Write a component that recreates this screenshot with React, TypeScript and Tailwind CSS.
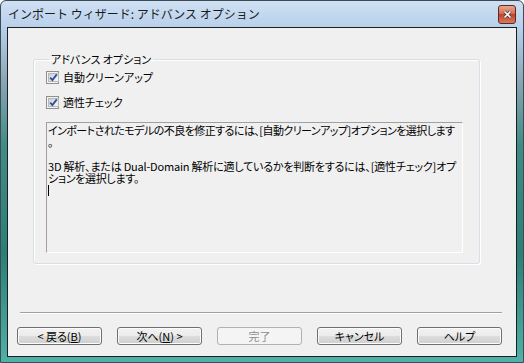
import React from 'react';

const jp = "font-['Noto_Sans_CJK_JP','Noto_Sans',sans-serif]";

const CheckBox = ({ label }: { label: string }) => (
  <div className="flex items-center gap-[4px] h-[13px]">
    <span className="w-[13px] h-[13px] border border-[#8f8f8f] bg-[#f4f4f4] p-[1px] flex shrink-0">
      <span className="flex-1 bg-[linear-gradient(135deg,#cfcfcf,#f7f7f7)] border border-[#b8b8b8] flex items-center justify-center">
        <svg width="9" height="9" viewBox="0 0 9 9">
          <path d="M1.2 4.6 L3.4 7 L7.8 1.4" fill="none" stroke="#2a4da0" strokeWidth="1.8" />
        </svg>
      </span>
    </span>
    <span className="text-[11px] leading-[13px] text-black [font-feature-settings:'palt']">{label}</span>
  </div>
);

const Btn = ({ children, disabled }: { children: React.ReactNode; disabled?: boolean }) =>
  disabled ? (
    <button className="w-[85px] h-[18px] rounded-[3px] border border-[#adb2b5] bg-[#f4f4f4] text-[11px] leading-none text-[#8d8d8d] flex items-center justify-center [font-feature-settings:'palt']">
      {children}
    </button>
  ) : (
    <button className="w-[85px] h-[18px] rounded-[3px] border border-[#707070] bg-[linear-gradient(#f2f2f2,#ebebeb_50%,#dddddd_50%,#cfcfcf)] shadow-[inset_0_0_0_1px_#fcfcfc] text-[11px] leading-none text-black flex items-center justify-center [font-feature-settings:'palt']">
      {children}
    </button>
  );

export default function App() {
  return (
    <div className={`${jp} w-[524px] h-[363px] flex flex-col border border-[#3d4b57] rounded-t-[6px] bg-[linear-gradient(#cfe0f3,#b6cfea_8%,#8aa6b6_22%,#3f8c86_40%,#2c7f77_70%,#4fb1a7)]`}>
      {/* タイトルバー */}
      <div className="h-[26px] flex items-center justify-between pl-[7px] pr-[7px] shrink-0">
        <span className="text-[12px] text-[#1b1b1b]">インポート ウィザード: アドバンス オプション</span>
        <div className="w-[18px] h-[19px] rounded-[3px] border border-[#5b2a22] bg-[linear-gradient(#eaa58f,#d3664c_50%,#c2432a_50%,#d97a5c)] flex items-center justify-center">
          <svg width="9" height="9" viewBox="0 0 9 9">
            <path d="M1.5 1.5 L7.5 7.5 M7.5 1.5 L1.5 7.5" stroke="#3a3a3a" strokeWidth="3" />
            <path d="M1.5 1.5 L7.5 7.5 M7.5 1.5 L1.5 7.5" stroke="#ffffff" strokeWidth="1.6" />
          </svg>
        </div>
      </div>

      {/* クライアント領域 */}
      <div className="mx-[6px] h-[330px] border border-[#1e1e1e] bg-[#f0f0f0] flex flex-col shrink-0">
        <fieldset className="mt-[24px] ml-[25px] w-[447px] h-[212px] border border-[#d5dfe5] rounded-[3px] shadow-[inset_1px_1px_0_#ffffff,1px_1px_0_#ffffff] pl-[12px] pt-[5px]">
          <legend className="ml-[3px] px-[2px] text-[11px] leading-[14px] text-black [font-feature-settings:'palt']">アドバンス オプション</legend>
          <CheckBox label="自動クリーンアップ" />
          <div className="mt-[12px]">
            <CheckBox label="適性チェック" />
          </div>
          <div className="mt-[13px] w-[417px] h-[131px] border-t border-l border-[#a0a0a0] border-r-white border-b-white border-r border-b bg-[#f0f0f0] pl-[1px] pt-[1px] text-[11px] leading-[12px] text-black [font-feature-settings:'palt'] whitespace-nowrap overflow-hidden">
            <div className="tracking-[-0.55px]">インポートされたモデルの不良を修正するには、[自動クリーンアップ]オプションを選択します</div>
            <div>。</div>
            <div>&nbsp;</div>
            <div className="tracking-[-0.2px]">3D 解析、または Dual-Domain 解析に適しているかを判断をするには、[適性チェック]オプ</div>
            <div className="tracking-[-0.3px]">ションを選択します。</div>
            <div className="w-[1px] h-[11px] bg-black mt-[1px]"></div>
          </div>
        </fieldset>

        <div className="mt-[48px] ml-[12px] mr-[14px] border-t border-[#a0a0a0] border-b border-b-white"></div>

        <div className="mt-[13px] ml-[9px] flex gap-[15px]">
          <Btn>
            &lt; 戻る(<span className="underline">B</span>)
          </Btn>
          <Btn>
            次へ(<span className="underline">N</span>) &gt;
          </Btn>
          <Btn disabled>完了</Btn>
          <Btn>キャンセル</Btn>
          <Btn>ヘルプ</Btn>
        </div>
      </div>
    </div>
  );
}
